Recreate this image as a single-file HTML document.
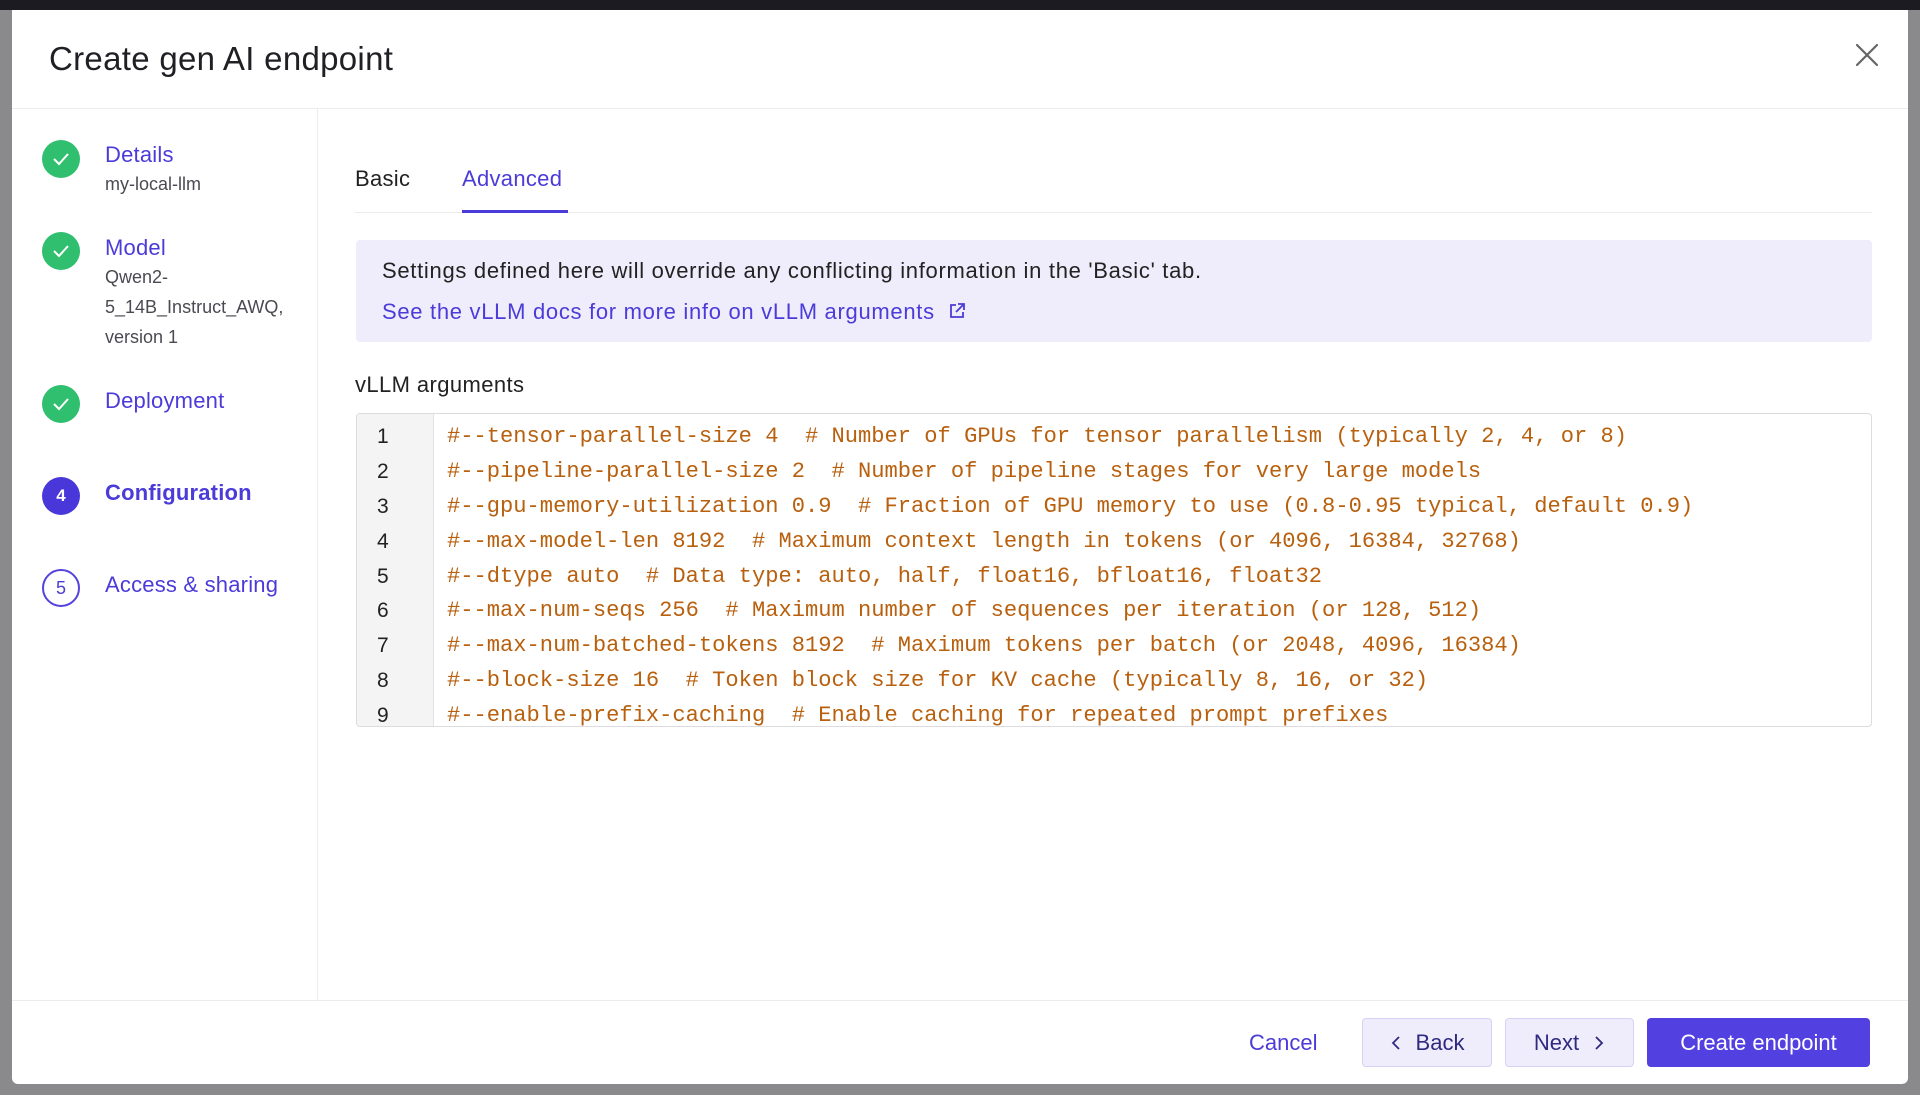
<!DOCTYPE html>
<html><head><meta charset="utf-8"><style>
*{margin:0;padding:0;box-sizing:border-box}
body{width:1920px;height:1095px;overflow:hidden;background:#8a8a8c;font-family:"Liberation Sans",sans-serif;position:relative}
.topbar{position:absolute;left:0;top:0;width:1920px;height:10px;background:#1c1b22}
.modal{position:absolute;left:12px;top:10px;width:1896px;height:1074px;background:#fff;border-radius:0 0 6px 6px}
.abs{position:absolute}
.title{left:37px;top:30px;font-size:33px;color:#1f1f24;letter-spacing:0.3px}
.hline{height:1px;background:#ececef}
.step{position:absolute;left:30px;width:38px;height:38px;border-radius:50%}
.done{background:#2fbf6e}
.done svg{position:absolute;left:10px;top:11px}
.lbl{position:absolute;left:93px;font-size:22px;color:#4b3bd8;letter-spacing:0.2px}
.sub{position:absolute;left:93px;font-size:18px;color:#4a4a52;line-height:30px}
.tab{font-size:22px;top:156px;letter-spacing:0.3px}
.info{left:344px;top:230px;width:1516px;height:102px;background:#efedfb;border-radius:4px}
.code{left:344px;top:403px;width:1516px;height:314px;border:1px solid #dcdce0;border-radius:4px;overflow:hidden;background:#fff}
.gut{position:absolute;left:0;top:0;width:77px;height:100%;background:#f4f4f5;border-right:1px solid #e2e2e6}
.ln{position:absolute;left:20px;font-size:21px;color:#222;font-family:"Liberation Sans",sans-serif}
.cl{position:absolute;left:90px;font-family:"Liberation Mono",monospace;font-size:22.1px;color:#b8600e;white-space:pre}
.btn{position:absolute;top:1008px;height:49px;border-radius:4px;font-size:22px;display:flex;align-items:center;justify-content:center}
.sec{background:#efedfb;border:1px solid #d6d1f5;color:#2e2a80}
</style></head><body>
<div class="topbar"></div>
<div class="modal">
<div class="abs title">Create gen AI endpoint</div>
<svg class="abs" style="left:1843px;top:33px" width="24" height="24" viewBox="0 0 24 24"><path d="M2 2L22 22M22 2L2 22" stroke="#666" stroke-width="2.2" stroke-linecap="round"/></svg>
<div class="abs hline" style="left:0;top:98px;width:1896px"></div>
<div class="abs" style="left:305px;top:99px;width:1px;height:891px;background:#ececef"></div>
<div class="abs hline" style="left:0;top:990px;width:1896px"></div>

<div class="step done" style="top:130px"><svg width="18" height="16" viewBox="0 0 18 16"><path d="M2 8l5 5L16 3" stroke="#fff" stroke-width="2" fill="none"/></svg></div>
<div class="lbl" style="top:132px">Details</div>
<div class="sub" style="top:159px">my-local-llm</div>
<div class="step done" style="top:222px"><svg width="18" height="16" viewBox="0 0 18 16"><path d="M2 8l5 5L16 3" stroke="#fff" stroke-width="2" fill="none"/></svg></div>
<div class="lbl" style="top:225px">Model</div>
<div class="sub" style="top:252px">Qwen2-<br>5_14B_Instruct_AWQ,<br>version 1</div>
<div class="step done" style="top:375px"><svg width="18" height="16" viewBox="0 0 18 16"><path d="M2 8l5 5L16 3" stroke="#fff" stroke-width="2" fill="none"/></svg></div>
<div class="lbl" style="top:378px">Deployment</div>
<div class="step" style="top:467px;background:#4a37d9;color:#fff;font-size:17px;font-weight:bold;text-align:center;line-height:38px">4</div>
<div class="lbl" style="top:470px;font-weight:bold">Configuration</div>
<div class="step" style="top:559px;border:2px solid #5443dc;color:#4b3bd8;font-size:18px;text-align:center;line-height:34px">5</div>
<div class="lbl" style="top:562px">Access &amp; sharing</div>

<div class="abs tab" style="left:343px;color:#222">Basic</div>
<div class="abs tab" style="left:450px;color:#4b3bd8">Advanced</div>
<div class="abs hline" style="left:343px;top:202px;width:1517px"></div>
<div class="abs" style="left:450px;top:200px;width:106px;height:3px;background:#4b3bd8"></div>

<div class="abs info">
<div class="abs" style="left:26px;top:18px;font-size:22px;letter-spacing:0.7px;color:#222;white-space:nowrap">Settings defined here will override any conflicting information in the 'Basic' tab.</div>
<div class="abs" style="left:26px;top:59px;font-size:22px;letter-spacing:0.7px;color:#4b3bd8;white-space:nowrap">See the vLLM docs for more info on vLLM arguments
<svg style="vertical-align:-1px;margin-left:6px" width="18" height="18" viewBox="0 0 18 18"><path d="M8 3H3v12h12v-5M10 2h6v6M16 2L8 10" stroke="#4b3bd8" stroke-width="1.8" fill="none"/></svg></div>
</div>

<div class="abs" style="left:343px;top:362px;font-size:22px;letter-spacing:0.4px;color:#222">vLLM arguments</div>
<div class="abs code">
<div class="gut"></div>
<div class="ln" style="top:11px">1</div><div class="ln" style="top:46px">2</div><div class="ln" style="top:81px">3</div><div class="ln" style="top:116px">4</div><div class="ln" style="top:151px">5</div><div class="ln" style="top:185px">6</div><div class="ln" style="top:220px">7</div><div class="ln" style="top:255px">8</div><div class="ln" style="top:290px">9</div>
<div class="cl" style="top:10px">#--tensor-parallel-size 4  # Number of GPUs for tensor parallelism (typically 2, 4, or 8)</div>
<div class="cl" style="top:45px">#--pipeline-parallel-size 2  # Number of pipeline stages for very large models</div>
<div class="cl" style="top:80px">#--gpu-memory-utilization 0.9  # Fraction of GPU memory to use (0.8-0.95 typical, default 0.9)</div>
<div class="cl" style="top:115px">#--max-model-len 8192  # Maximum context length in tokens (or 4096, 16384, 32768)</div>
<div class="cl" style="top:150px">#--dtype auto  # Data type: auto, half, float16, bfloat16, float32</div>
<div class="cl" style="top:184px">#--max-num-seqs 256  # Maximum number of sequences per iteration (or 128, 512)</div>
<div class="cl" style="top:219px">#--max-num-batched-tokens 8192  # Maximum tokens per batch (or 2048, 4096, 16384)</div>
<div class="cl" style="top:254px">#--block-size 16  # Token block size for KV cache (typically 8, 16, or 32)</div>
<div class="cl" style="top:289px">#--enable-prefix-caching  # Enable caching for repeated prompt prefixes</div>
</div>

<div class="abs" style="left:1237px;top:1020px;font-size:22px;color:#4b3bd8">Cancel</div>
<div class="btn sec" style="left:1350px;width:130px"><svg width="12" height="18" viewBox="0 0 12 18" style="margin-right:14px"><path d="M9 3L3 9l6 6" stroke="#2e2a80" stroke-width="1.8" fill="none"/></svg>Back</div>
<div class="btn sec" style="left:1493px;width:129px">Next<svg width="12" height="18" viewBox="0 0 12 18" style="margin-left:14px"><path d="M3 3l6 6-6 6" stroke="#2e2a80" stroke-width="1.8" fill="none"/></svg></div>
<div class="btn" style="left:1635px;width:223px;background:#5340e0;color:#fff">Create endpoint</div>
</div>
</body></html>
